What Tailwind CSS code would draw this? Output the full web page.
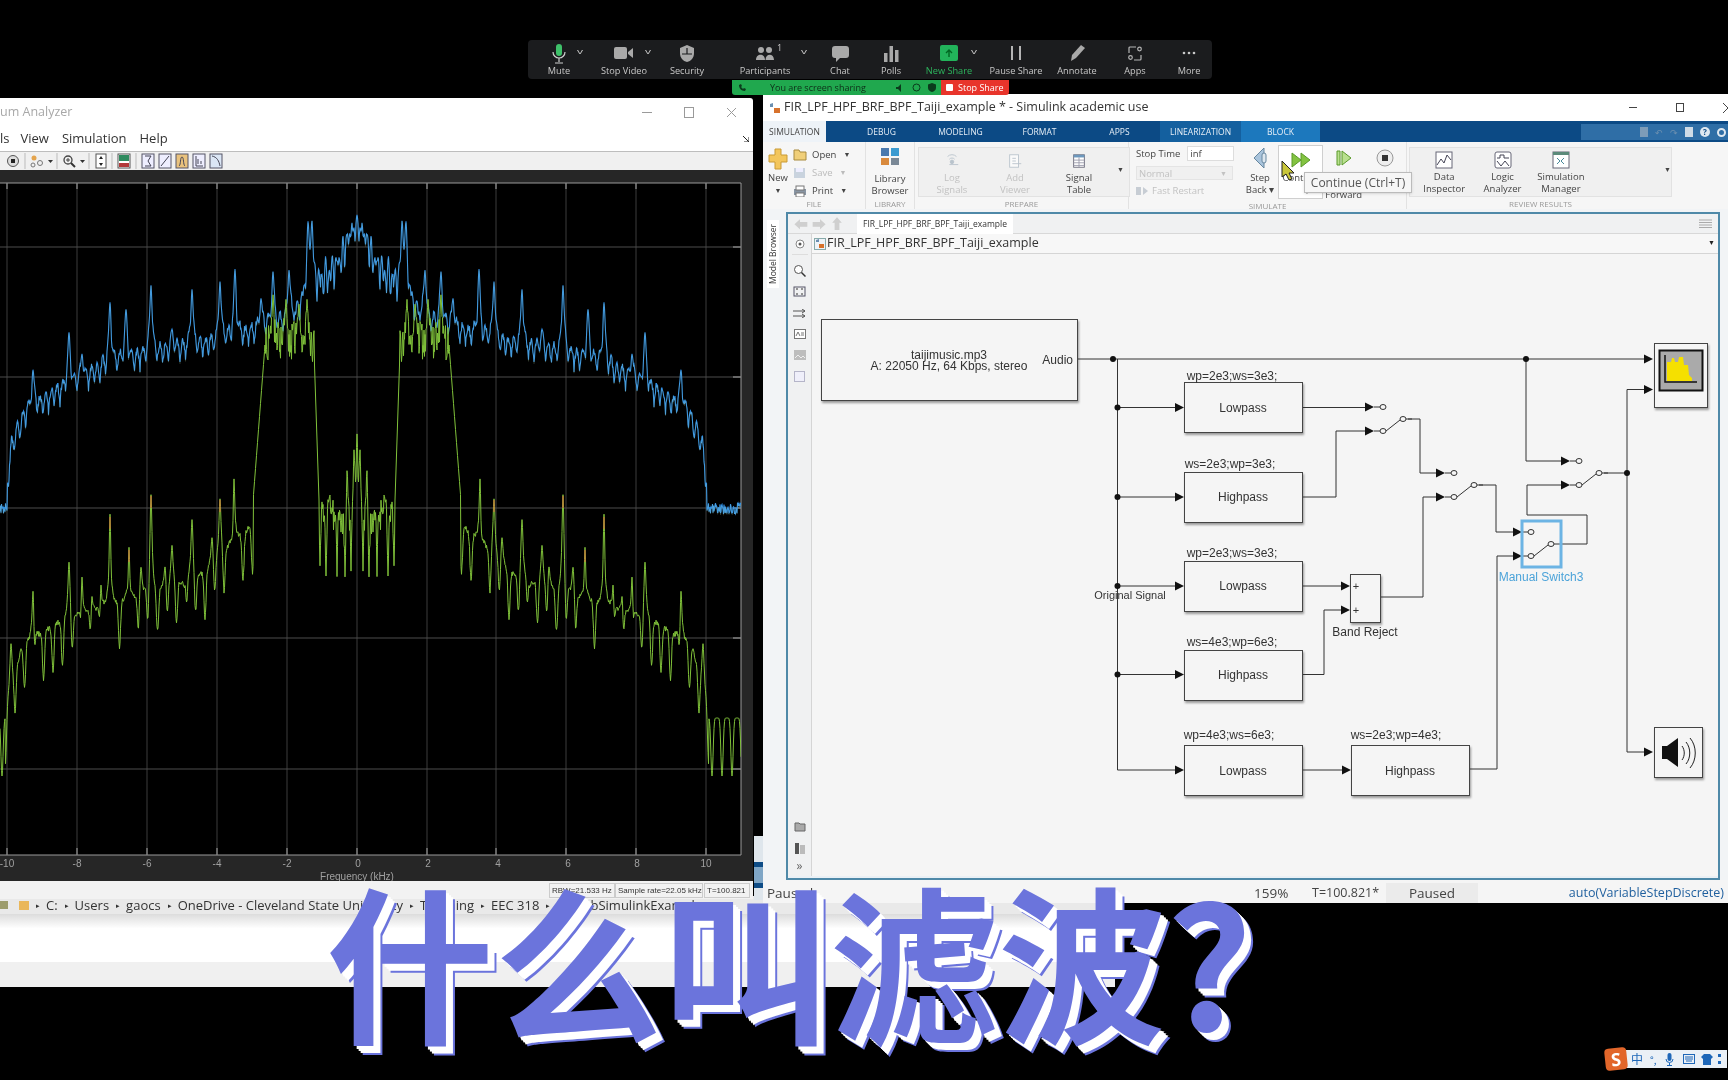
<!DOCTYPE html>
<html lang="zh-CN">
<head>
    <meta charset="UTF-8">
    <title>什么叫滤波?</title>
    <script src="https://cdn.jsdelivr.net/npm/@tailwindcss/browser@4"></script>
</head>
<body class="bg-black">
<div class="relative w-[1728px] h-[1080px] overflow-hidden bg-black font-['Open_Sans',sans-serif] blur-[0.5px]">

    <!-- Zoom toolbar -->
    <div class="absolute left-[528px] top-[40px] w-[684px] h-[39px] rounded-[4px] bg-[#1b1c1e] flex text-[9.200px] text-[#c8c8c8] text-center">
        <div class="relative w-[62px] flex flex-col items-center justify-between pt-[4px] pb-[1px]">
            <svg width="16" height="20" viewBox="0 0 16 20"><rect x="5" y="0" width="6" height="12" rx="3" fill="#3fc16a"/><path d="M2 8a6 6 0 0 0 12 0M8 14v4M4 19h8" fill="none" stroke="#cfcfcf" stroke-width="1.2"/></svg>
            <span>Mute</span>
            <span class="absolute left-[50px] top-[5px] text-[8px] scale-x-150">v</span>
        </div>
        <div class="relative w-[68px] flex flex-col items-center justify-between pt-[6px] pb-[1px]">
            <svg width="20" height="14" viewBox="0 0 20 14"><rect x="0" y="1" width="13" height="12" rx="2" fill="#a9a9a9"/><path d="M14 6l5-4v10l-5-4z" fill="#a9a9a9"/></svg>
            <span>Stop Video</span>
            <span class="absolute left-[56px] top-[5px] text-[8px] scale-x-150">v</span>
        </div>
        <div class="w-[58px] flex flex-col items-center justify-between pt-[4px] pb-[1px]">
            <svg width="16" height="19" viewBox="0 0 16 19"><path d="M8 1l7 3v5c0 5-3 8-7 9-4-1-7-4-7-9V4z" fill="#a9a9a9"/><path d="M8 4v6H3M8 10h5" stroke="#1b1c1e" stroke-width="1.2" fill="none"/></svg>
            <span>Security</span>
        </div>
        <div class="relative w-[98px] flex flex-col items-center justify-between pt-[6px] pb-[1px]">
            <svg width="20" height="15" viewBox="0 0 20 15"><circle cx="6" cy="4" r="3" fill="#a9a9a9"/><circle cx="14" cy="4" r="3" fill="#a9a9a9"/><path d="M1 14c0-7 9-7 9 0zM10.500 14c0-7 8.500-7 8.500 0z" fill="#a9a9a9"/></svg>
            <span>Participants</span>
            <span class="absolute left-[61px] top-[1px] text-[9px]">1</span>
            <span class="absolute left-[86px] top-[5px] text-[8px] scale-x-150">v</span>
        </div>
        <div class="w-[52px] flex flex-col items-center justify-between pt-[6px] pb-[1px]">
            <svg width="17" height="16" viewBox="0 0 17 16"><path d="M3 0h11a3 3 0 0 1 3 3v6a3 3 0 0 1-3 3H8l-4 4v-4H3a3 3 0 0 1-3-3V3a3 3 0 0 1 3-3z" fill="#a9a9a9"/></svg>
            <span>Chat</span>
        </div>
        <div class="w-[50px] flex flex-col items-center justify-between pt-[5px] pb-[1px]">
            <svg width="15" height="17" viewBox="0 0 15 17"><rect x="0" y="8" width="3.500" height="9" fill="#a9a9a9"/><rect x="5.500" y="1" width="3.500" height="16" fill="#a9a9a9"/><rect x="11" y="5" width="3.500" height="12" fill="#a9a9a9"/></svg>
            <span>Polls</span>
        </div>
        <div class="relative w-[66px] flex flex-col items-center justify-between pt-[5px] pb-[1px] text-[#2db55d]">
            <svg width="18" height="16" viewBox="0 0 18 16"><rect width="18" height="16" rx="2" fill="#22b35a"/><path d="M9 12V5M6 8l3-3 3 3" fill="none" stroke="#062" stroke-width="1.400"/></svg>
            <span>New Share</span>
            <span class="absolute left-[56px] top-[5px] text-[8px] text-[#c8c8c8] scale-x-150">v</span>
        </div>
        <div class="w-[68px] flex flex-col items-center justify-between pt-[6px] pb-[1px]">
            <svg width="12" height="14" viewBox="0 0 12 14"><rect x="1" width="2" height="14" fill="#b5b5b5"/><rect x="9" width="2" height="14" fill="#b5b5b5"/></svg>
            <span>Pause Share</span>
        </div>
        <div class="w-[54px] flex flex-col items-center justify-between pt-[5px] pb-[1px]">
            <svg width="15" height="16" viewBox="0 0 15 16"><path d="M11 0l4 3-9 10-5 3 1-6z" fill="#a9a9a9"/></svg>
            <span>Annotate</span>
        </div>
        <div class="w-[62px] flex flex-col items-center justify-between pt-[6px] pb-[1px]">
            <svg width="14" height="15" viewBox="0 0 14 15" fill="none" stroke="#b5b5b5" stroke-width="1.200"><path d="M8 1H2a1 1 0 0 0-1 1v5M13 9v4a1 1 0 0 1-1 1H6"/><circle cx="11.500" cy="3" r="1.800"/><circle cx="2.500" cy="11.500" r="1.800"/></svg>
            <span>Apps</span>
        </div>
        <div class="w-[46px] flex flex-col items-center justify-between pt-[11px] pb-[1px]">
            <svg width="14" height="4" viewBox="0 0 14 4"><circle cx="2" cy="2" r="1.300" fill="#c8c8c8"/><circle cx="7" cy="2" r="1.300" fill="#c8c8c8"/><circle cx="12" cy="2" r="1.300" fill="#c8c8c8"/></svg>
            <span>More</span>
        </div>
    </div>

    <!-- Screen sharing banner -->
    <div class="absolute left-[732px] top-[80px] flex h-[15px] text-[9px] leading-[15px] z-10">
        <div class="w-[209px] bg-[#20a84e] rounded-bl-[3px] text-[#0d2e18] flex items-center pl-[6px]">
            <svg width="8" height="8" viewBox="0 0 8 8"><path d="M1 1l2-1 1 2-1 1 2 2 1-1 2 1-1 2C3 7 1 4 1 1z" fill="#0b3b1c"/></svg>
            <span class="ml-[24px]">You are screen sharing</span>
            <svg class="ml-[30px]" width="9" height="8" viewBox="0 0 9 8"><path d="M0 3h2l3-3v8L2 5H0z" fill="#0b3b1c"/></svg>
            <svg class="ml-[7px]" width="9" height="9" viewBox="0 0 9 9"><circle cx="4.500" cy="4.500" r="3.500" fill="none" stroke="#0b3b1c"/></svg>
            <svg class="ml-[7px]" width="8" height="9" viewBox="0 0 8 9"><path d="M4 0l4 1.500V5c0 2-2 3.500-4 4-2-.5-4-2-4-4V1.500z" fill="#0b3b1c"/></svg>
        </div>
        <div class="w-[68px] bg-[#e8342b] rounded-br-[3px] text-white flex items-center pl-[5px]">
            <span class="w-[7px] h-[7px] bg-white rounded-[1px] mr-[5px]"></span>Stop Share
        </div>
    </div>

    <!-- File explorer behind the two windows -->
    <div class="absolute left-0 top-[896px] w-[1115px] h-[91px] bg-white">
        <div class="h-[18px] bg-[#e9e9e9] flex items-center text-[13px] leading-[15px] text-[#333] whitespace-nowrap pl-[3px]">
            <span class="w-[8px] h-[8px] bg-[#9c9c6c] -ml-[3px]"></span>
            <span class="w-[10px] h-[9px] bg-[#eab75a] ml-[11px]"></span>
            <span class="ml-[7px] text-[7px]">▸</span><span class="ml-[6px]">C:</span>
            <span class="ml-[7px] text-[7px]">▸</span><span class="ml-[6px]">Users</span>
            <span class="ml-[7px] text-[7px]">▸</span><span class="ml-[6px]">gaocs</span>
            <span class="ml-[7px] text-[7px]">▸</span><span class="ml-[6px]">OneDrive - Cleveland State University</span>
            <span class="ml-[7px] text-[7px]">▸</span><span class="ml-[6px]">Teaching</span>
            <span class="ml-[7px] text-[7px]">▸</span><span class="ml-[6px]">EEC 318</span>
            <span class="ml-[7px] text-[7px]">▸</span><span class="ml-[6px]">MatlabSimulinkExamples</span>
        </div>
        <div class="h-[48px] bg-gradient-to-b from-[#dcdcdc] via-white via-30% to-white"></div>
        <div class="h-[25px] bg-[#f0f0f0]"></div>
    </div>

    <!-- Spectrum Analyzer window -->
    <div class="absolute left-0 top-[98px] w-[753px] h-[801px] bg-white rounded-tr-[3px] flex flex-col">
        <div class="h-[28px] flex items-center justify-between text-[12.500px] text-[#a8a8a8]">
            <span>um Analyzer</span>
            <div class="flex items-center mr-[16px] gap-[32px]">
                <span class="w-[10px] h-px bg-[#9a9a9a]"></span>
                <span class="w-[10px] h-[11px] border border-[#9a9a9a]"></span>
                <svg width="11" height="11" viewBox="0 0 11 11"><path d="M1 1l9 9M10 1l-9 9" stroke="#9a9a9a"/></svg>
            </div>
        </div>
        <div class="relative h-[25px] flex items-center text-[13px] text-[#333]">
            <span>ls</span><span class="ml-[11px]">View</span><span class="ml-[13px]">Simulation</span><span class="ml-[13px]">Help</span>
            <svg class="absolute left-[743px] top-[10px]" width="6" height="6" viewBox="0 0 6 6"><path d="M0 0l6 6M6 1v5H1" stroke="#222" fill="none"/></svg>
        </div>
        <div class="h-[19px] bg-[#f0f0f0] border-t border-[#bdbdbd] flex items-center">
            <svg width="225" height="18" viewBox="0 0 225 18">
                <circle cx="13" cy="9" r="5.500" fill="#ddd" stroke="#555"/><rect x="11" y="7" width="4" height="4" fill="#222"/>
                <path d="M25 1v16M57 1v16M89 1v16M112 1v16M136 1v16" stroke="#bbb"/>
                <circle cx="34" cy="6" r="2.500" fill="#e4a44d"/><circle cx="40" cy="11" r="2.500" fill="none" stroke="#777"/><circle cx="33" cy="13" r="2" fill="none" stroke="#777"/>
                <path d="M48 8h5l-2.500 3z" fill="#333"/>
                <circle cx="68" cy="8" r="4" fill="none" stroke="#444" stroke-width="1.300"/><path d="M71 11l4 4" stroke="#333" stroke-width="2"/><path d="M66 8h4M68 6v4" stroke="#444"/>
                <path d="M80 8h5l-2.500 3z" fill="#333"/>
                <rect x="96" y="2" width="10" height="14" fill="#fff" stroke="#555"/><path d="M101 4l-2 3h4zM101 14l-2-3h4z" fill="#222"/>
                <rect x="118" y="2" width="12" height="14" fill="#fff" stroke="#555"/><rect x="119" y="3" width="10" height="6" fill="#2f8a5e"/><rect x="119" y="11" width="10" height="4" fill="#b23a3a"/>
                <g fill="#eef" stroke="#556">
                    <rect x="142" y="2" width="12" height="14"/><rect x="159" y="2" width="12" height="14"/><rect x="176" y="2" width="12" height="14" fill="#e9c27d"/><rect x="193" y="2" width="12" height="14"/><rect x="210" y="2" width="12" height="14" fill="#dbe6f5"/>
                </g>
                <path d="M145 4h6l-3 5 3 5h-6M161 14l8-10M179 14c2-1 1-9 3-9s1 8 3 9M196 4v10h7M198 12v-5M201 12V9M212 4c5 1 7 5 8 10" fill="none" stroke="#445"/>
            </svg>
        </div>
        <div class="flex-1 relative bg-[#262626]">
            <svg id="spectrum" class="absolute inset-0" width="753" height="711" viewBox="0 170 753 711" font-family="Liberation Sans" font-size="10" fill="#a0a0a0">
                <defs><clipPath id="plotClip"><rect x="0" y="183" width="741" height="672"/></clipPath></defs>
                <rect x="0" y="183" width="741" height="672" fill="#000"/>
                <path d="M0 183H741V855H0" fill="none" stroke="#9a9a9a"/>
                <path d="M7 183V855M77 183V855M147 183V855M217 183V855M287 183V855M357 183V855M427 183V855M496 183V855M566 183V855M636 183V855M706 183V855" stroke="#3c3c3c"/>
                <path d="M0 247H741M0 377H741M0 508H741M0 638H741M0 769H741" stroke="#4c4c4c"/>
                <path d="M7 183v6M77 183v6M147 183v6M217 183v6M287 183v6M357 183v6M427 183v6M496 183v6M566 183v6M636 183v6M706 183v6M7 855v-7M77 855v-7M147 855v-7M217 855v-7M287 855v-7M357 855v-7M427 855v-7M496 855v-7M566 855v-7M636 855v-7M706 855v-7M733 247h8M733 377h8M733 508h8M733 638h8M733 769h8" stroke="#aaa"/>
                <g clip-path="url(#plotClip)">
                    <path id="traceBlue" fill="none" stroke="#2f8fe6" stroke-width="1.100"/>
                    <path id="traceBlueTip" fill="none" stroke="#b9e0a8" stroke-width="0.300" opacity="0.500"/>
                    <path id="traceGreen" fill="none" stroke="#80c23a" stroke-width="1"/>
                    <path id="traceRed" fill="none" stroke="#e2653a" stroke-width="1"/>
                </g>
                <g text-anchor="middle">
                    <text x="7" y="867">-10</text><text x="77" y="867">-8</text><text x="147" y="867">-6</text><text x="217" y="867">-4</text><text x="287" y="867">-2</text><text x="358" y="867">0</text><text x="428" y="867">2</text><text x="498" y="867">4</text><text x="568" y="867">6</text><text x="637" y="867">8</text><text x="706" y="867">10</text>
                    <text x="357" y="880">Frequency (kHz)</text>
                </g>
            </svg>
        </div>
        <div class="h-[18px] bg-[#f2f2f2] flex justify-end items-center text-[8px] whitespace-nowrap font-['Liberation_Sans',sans-serif] text-[#333] pr-[3px]">
            <span class="w-[66px] h-[15px] border border-[#ccc] pl-[2px] leading-[14px]">RBW=21.533 Hz</span>
            <span class="w-[88px] h-[15px] border border-[#ccc] pl-[2px] leading-[14px]">Sample rate=22.05 kHz</span>
            <span class="w-[46px] h-[15px] border border-[#ccc] ml-[1px] pl-[2px] leading-[14px]">T=100.821</span>
        </div>
    </div>
    <div class="absolute left-[754px] top-[836px] w-[9px] h-[64px] bg-[#dfe6ec]">
        <div class="h-[26px] mt-[26px] border-y-[5px] border-[#0e4c86] bg-[#7fa6c6]"></div>
    </div>

    <!-- Simulink window -->
    <div class="absolute left-[763px] top-[94px] w-[965px] h-[809px] bg-[#f2f4f6] flex flex-col">
        <div class="h-[27px] bg-white flex items-center justify-between text-[12.500px] text-[#333]">
            <div class="flex items-center pl-[6px]">
                <svg width="12" height="12" viewBox="0 0 12 12"><path d="M1 2l3-1v4H1z" fill="#6a8fb0"/><rect x="5" y="6" width="6" height="5" fill="#d7722c"/></svg>
                <span class="ml-[3px]">FIR_LPF_HPF_BRF_BPF_Taiji_example * - Simulink academic use</span>
            </div>
            <div class="flex items-center gap-[39px] -mr-[5px]">
                <span class="w-[8px] h-px bg-[#444]"></span>
                <span class="w-[8px] h-[9px] border border-[#444]"></span>
                <svg width="10" height="10" viewBox="0 0 10 10"><path d="M0 0l10 10M10 0L0 10" stroke="#444"/></svg>
            </div>
        </div>
        <!-- tabs -->
        <div class="h-[21px] bg-[#0c4a85] flex items-stretch text-[8.500px] leading-[21px] text-[#e6eef6] text-center">
            <span class="w-[63px] bg-[#eef3f8] text-[#444]">SIMULATION</span>
            <span class="w-[79px] ml-[16px]">DEBUG</span>
            <span class="w-[79px]">MODELING</span>
            <span class="w-[79px]">FORMAT</span>
            <span class="w-[81px]">APPS</span>
            <span class="w-[81px] bg-[#14609f]">LINEARIZATION</span>
            <span class="w-[79px] bg-[#1c78bd]">BLOCK</span>
            <div class="ml-auto w-[147px] h-[16px] mt-[3px] bg-[#2f6ea6] flex items-center justify-end gap-[7px] pr-[2px]">
                <span class="w-[8px] h-[10px] bg-[#7d9cb8]"></span>
                <span class="text-[#6d90b0] text-[9px]">↶</span>
                <span class="text-[#6d90b0] text-[9px]">↷</span>
                <span class="w-[8px] h-[10px] bg-[#cfdbe6]"></span>
                <span class="w-[10px] h-[10px] rounded-full bg-[#dfe8f0] text-[#0c4a85] text-[8px] leading-[10px] font-bold">?</span>
                <span class="w-[9px] h-[9px] rounded-full border-2 border-[#dfe8f0]"></span>
            </div>
        </div>
        <!-- ribbon -->
        <div class="relative h-[67px] bg-[#f6f6f6] flex text-[9.500px] leading-[12px] text-[#444] text-center">
            <div class="w-[103px] flex flex-col border-r border-[#e2e2e2]">
                <div class="flex-1 flex pt-[6px]">
                    <div class="w-[30px] flex flex-col items-center">
                        <svg width="20" height="22" viewBox="0 0 20 22"><path d="M7 1h6v6h6v7h-6v7H7v-7H1V7h6z" fill="#f3c65c" stroke="#c99a35"/></svg>
                        <span class="mt-[2px]">New</span><span class="text-[7px] leading-[13px]">▼</span>
                    </div>
                    <div class="w-[60px] flex flex-col gap-[4px] text-left">
                        <div class="flex items-center h-[14px]"><svg width="14" height="12" viewBox="0 0 14 12"><path d="M1 1h5l1 2h6v8H1z" fill="#f0cf79" stroke="#a88a3e"/></svg><span class="ml-[5px]">Open</span><span class="ml-[7px] text-[7px]">▼</span></div>
                        <div class="flex items-center h-[14px] text-[#bbb]"><svg width="14" height="12" viewBox="0 0 14 12"><rect x="1" y="1" width="11" height="10" fill="#c9d3de"/><rect x="3" y="1" width="7" height="4" fill="#eef"/></svg><span class="ml-[5px]">Save</span><span class="ml-[7px] text-[7px]">▼</span></div>
                        <div class="flex items-center h-[14px]"><svg width="14" height="12" viewBox="0 0 14 12"><rect x="1" y="4" width="12" height="6" fill="#8895a3"/><rect x="3" y="1" width="8" height="4" fill="#fff" stroke="#777"/><rect x="3" y="8" width="8" height="4" fill="#fff" stroke="#777"/></svg><span class="ml-[5px]">Print</span><span class="ml-[7px] text-[7px]">▼</span></div>
                    </div>
                </div>
                <span class="text-[8px] leading-[10px] text-[#999]">FILE</span>
            </div>
            <div class="w-[49px] flex flex-col border-r border-[#e2e2e2]">
                <div class="flex-1 flex flex-col items-center pt-[5px]">
                    <svg width="20" height="19" viewBox="0 0 20 19"><rect x="1" y="1" width="8" height="8" fill="#4a79ad"/><rect x="11" y="1" width="8" height="8" fill="#3b9bd1"/><rect x="1" y="11" width="8" height="7" fill="#d98a3d"/><rect x="11" y="11" width="8" height="7" fill="#7a8896"/></svg>
                    <span class="mt-[7px]">Library</span><span>Browser</span>
                </div>
                <span class="text-[8px] leading-[10px] text-[#999]">LIBRARY</span>
            </div>
            <div class="w-[214px] flex flex-col border-r border-[#e2e2e2]">
                <div class="flex-1 pt-[5px] pl-[3px]">
                    <div class="h-[50px] w-[212px] bg-[#f0f0f0] border border-[#e2e2e2] flex">
                        <div class="w-[64px] pl-[2px] flex flex-col items-center text-[#c2c2c2]">
                            <svg class="mt-[5px]" width="18" height="18" viewBox="0 0 18 18" fill="none" stroke="#b9c3cc"><path d="M4 4a7 7 0 0 1 10 0M6 7a4 4 0 0 1 6 0"/><circle cx="9" cy="10" r="2" fill="#b9c3cc"/><path d="M6 13h10"/></svg>
                            <span class="mt-[3px]">Log</span><span>Signals</span>
                        </div>
                        <div class="w-[64px] flex flex-col items-center text-[#c2c2c2]">
                            <svg class="mt-[5px]" width="18" height="18" viewBox="0 0 18 18" fill="none" stroke="#b9c3cc"><rect x="3" y="2" width="10" height="14" fill="#fafafa"/><path d="M6 6h4M6 9h4M6 12h10"/></svg>
                            <span class="mt-[3px]">Add</span><span>Viewer</span>
                        </div>
                        <div class="w-[64px] flex flex-col items-center">
                            <svg class="mt-[5px]" width="18" height="18" viewBox="0 0 18 18"><rect x="3" y="2" width="12" height="14" fill="#fff" stroke="#667"/><rect x="3" y="2" width="12" height="3" fill="#6d98bd"/><path d="M3 8h12M3 11h12M3 14h12M9 5v11" stroke="#99a"/></svg>
                            <span class="mt-[3px]">Signal</span><span>Table</span>
                        </div>
                        <span class="ml-[6px] mt-[16px] text-[7px]">▼</span>
                    </div>
                </div>
                <span class="text-[8px] leading-[10px] text-[#999]">PREPARE</span>
            </div>
            <div class="w-[278px] flex flex-col border-r border-[#e2e2e2]">
                <div class="flex-1 flex pt-[4px]">
                    <div class="w-[113px] pl-[7px] flex flex-col text-left">
                        <div class="flex items-center h-[15px]"><span>Stop Time</span><span class="ml-[7px] w-[47px] h-[15px] bg-white border border-[#ddd] pl-[2px] leading-[14px]">inf</span></div>
                        <div class="mt-[5px] w-[97px] h-[14px] bg-[#f0f0f0] border border-[#e4e4e4] text-[#c2c2c2] flex justify-between pl-[2px] pr-[5px] leading-[13px]"><span>Normal</span><span class="text-[7px]">▼</span></div>
                        <div class="mt-[5px] flex items-center text-[#c2c2c2]"><svg width="12" height="10" viewBox="0 0 12 10"><path d="M0 1h5v8H0zM7 1l5 4-5 4z" fill="#c7cdd4"/></svg><span class="ml-[4px]">Fast Restart</span></div>
                    </div>
                    <div class="w-[37px] flex flex-col items-center">
                        <svg class="mt-[1px]" width="18" height="22" viewBox="0 0 18 22"><path d="M13 1v20L3 11z" fill="#a9c4dc" stroke="#67879f"/><rect x="11" y="6" width="4" height="10" rx="2" fill="#dde7ef" stroke="#67879f"/></svg>
                        <span class="mt-[3px]">Step</span><span>Back ▾</span>
                    </div>
                    <div class="w-[45px] -mt-[1px] h-[54px] bg-white border border-[#cfcfcf] flex flex-col items-start">
                        <svg class="ml-[12px] mt-[6px]" width="20" height="16" viewBox="0 0 20 16"><path d="M1 1l9 7-9 7zM10 1l9 7-9 7z" fill="#83c341" stroke="#5a9a2b"/></svg>
                        <span class="ml-[3px] mt-[4px]">Cont</span>
                        <span class="ml-[24px] mt-[2px] text-[7px]">▼</span>
                    </div>
                    <div class="w-[41px] flex flex-col items-center">
                        <svg class="mt-[4px]" width="16" height="16" viewBox="0 0 16 16"><path d="M1 1h3v14H1zM6 1l9 7-9 7z" fill="#b9e08f" stroke="#5a9a2b"/></svg>
                        <span class="mt-[23px]">Forward</span>
                    </div>
                    <div class="w-[42px] flex justify-center">
                        <svg class="mt-[3px]" width="18" height="18" viewBox="0 0 18 18"><circle cx="9" cy="9" r="8" fill="#eee" stroke="#999"/><rect x="6" y="6" width="6" height="6" fill="#333"/></svg>
                    </div>
                </div>
                <span class="text-[8px] leading-[10px] text-[#999]">SIMULATE</span>
            </div>
            <div class="w-[267px] flex flex-col">
                <div class="flex-1 pt-[5px] pl-[2px]">
                    <div class="h-[50px] w-[263px] bg-[#f0f0f0] border border-[#e2e2e2] flex pl-[5px]">
                        <div class="w-[60px] flex flex-col items-center">
                            <svg class="mt-[3px]" width="18" height="18" viewBox="0 0 18 18"><rect x="1" y="1" width="16" height="16" fill="#fff" stroke="#667"/><path d="M2 14l4-6 3 4 3-8 4 5" fill="none" stroke="#445"/></svg>
                            <span class="mt-[2px]">Data</span><span>Inspector</span>
                        </div>
                        <div class="w-[60px] flex flex-col items-center">
                            <svg class="mt-[3px]" width="18" height="18" viewBox="0 0 18 18"><rect x="1" y="1" width="16" height="16" rx="2" fill="#fff" stroke="#667"/><path d="M3 7h3V4h4v3h5M3 10l4 5 4-5 4 5" fill="none" stroke="#445"/></svg>
                            <span class="mt-[2px]">Logic</span><span>Analyzer</span>
                        </div>
                        <div class="w-[60px] flex flex-col items-center">
                            <svg class="mt-[3px]" width="18" height="18" viewBox="0 0 18 18"><rect x="1" y="1" width="16" height="16" fill="#fff" stroke="#667"/><rect x="1" y="1" width="16" height="3" fill="#5b8a7a"/><path d="M5 7l3 3-3 3M12 7l-3 3 3 3" fill="none" stroke="#4a8a9a"/></svg>
                            <span class="mt-[2px]">Simulation</span><span>Manager</span>
                        </div>
                        <span class="ml-[74px] mt-[16px] text-[7px]">▼</span>
                    </div>
                </div>
                <span class="text-[8px] leading-[10px] text-[#999]">REVIEW RESULTS</span>
            </div>
            <!-- tooltip and pointer over the ribbon -->
            <div class="absolute left-[541px] top-[30px] w-[108px] h-[21px] bg-[#f6f6f6] border border-[#bbb] text-[12px] leading-[19px] text-[#555] shadow-sm">Continue (Ctrl+T)</div>
            <svg class="absolute left-[518px] top-[18px]" width="14" height="22" viewBox="0 0 14 22"><path d="M1 1v16l4-3 3 6 3-1-3-6h5z" fill="#c9c63a" stroke="#222"/></svg>
        </div>
        <!-- model editor -->
        <div class="flex-1 flex pt-[3px]">
            <div class="w-[23px] relative">
                <span class="absolute left-[4px] top-[8px] h-[68px] text-[8.500px] leading-[12px] whitespace-nowrap text-[#333] text-center bg-white [writing-mode:vertical-rl] rotate-180">Model Browser</span>
            </div>
            <div class="w-[934px] h-[668px] border-2 border-[#4f89a8] flex flex-col bg-[#f5f5f5]">
                <div class="h-[20px] bg-[#f0f1f2] border-b border-[#d8d8d8] flex items-center">
                    <span class="w-[69px] pl-[6px] text-[#cfcfcf] text-[14px] leading-[18px] tracking-[4px]">⬅➡⬆</span>
                    <span class="w-[156px] h-[20px] bg-white text-[8.500px] leading-[20px] text-center text-[#333]">FIR_LPF_HPF_BRF_BPF_Taiji_example</span>
                    <svg class="ml-auto mr-[6px]" width="13" height="10" viewBox="0 0 13 10"><path d="M0 1h13M0 3.500h13M0 6h13M0 8.500h13" stroke="#aaa"/></svg>
                </div>
                <div class="flex-1 flex">
                    <!-- palette column -->
                    <div class="w-[24px] bg-[#f0f1f2] border-r border-[#d5d5d5] flex flex-col items-center">
                        <svg class="mt-[5px]" width="10" height="10" viewBox="0 0 10 10"><circle cx="5" cy="5" r="4" fill="#fff" stroke="#888"/><circle cx="5" cy="5" r="1.500" fill="#555"/></svg>
                        <div class="w-[16px] h-px bg-[#ddd] my-[5px]"></div>
                        <svg class="mt-[4px]" width="13" height="13" viewBox="0 0 13 13"><circle cx="5.500" cy="5.500" r="4" fill="#fff" stroke="#555"/><path d="M8.500 8.500l4 4" stroke="#333" stroke-width="1.500"/></svg>
                        <svg class="mt-[8px]" width="13" height="13" viewBox="0 0 13 13"><rect x="1" y="2" width="11" height="9" fill="none" stroke="#556"/><path d="M3 4h2M8 4h2M3 9h2M8 9h2" stroke="#333"/></svg>
                        <svg class="mt-[11px]" width="13" height="9" viewBox="0 0 13 9"><path d="M0 2h12M0 7h12M9 0l3 2-3 2M9 5l3 2-3 2" fill="none" stroke="#555"/></svg>
                        <svg class="mt-[11px]" width="12" height="10" viewBox="0 0 12 10"><rect x=".5" y=".5" width="11" height="9" fill="#fff" stroke="#777"/><path d="M2 7l2-4 2 4M7 4h3M7 6h3" fill="none" stroke="#777"/></svg>
                        <svg class="mt-[11px]" width="12" height="10" viewBox="0 0 12 10"><rect width="12" height="10" fill="#bdbdbd"/><path d="M1 8l3-3 3 3 2-2 2 2" fill="none" stroke="#eee"/></svg>
                        <svg class="mt-[11px]" width="11" height="11" viewBox="0 0 11 11"><rect x=".5" y=".5" width="10" height="10" fill="#efeffa" stroke="#b5b5c9"/></svg>
                        <svg class="mt-auto" width="12" height="11" viewBox="0 0 12 11"><path d="M1 2h4l1 1h5v7H1z" fill="#aaa" stroke="#666"/></svg>
                        <svg class="mt-[10px]" width="12" height="13" viewBox="0 0 12 13"><rect x="1" y="1" width="4" height="11" fill="#555"/><rect x="6" y="3" width="5" height="9" fill="#bbb"/></svg>
                        <span class="mt-[4px] mb-[3px] text-[12px] leading-[14px] text-[#666]">»</span>
                    </div>
                    <div class="flex-1 flex flex-col">
                        <!-- address bar -->
                        <div class="h-[20px] bg-[#f7f7f7] border-b border-[#d5d5d5] flex items-center">
                            <svg class="ml-[2px]" width="12" height="12" viewBox="0 0 12 12"><rect x=".5" y=".5" width="11" height="11" fill="#eef3f8" stroke="#8aa"/><path d="M2 2l3-1v3H2z" fill="#6a8fb0"/><rect x="5" y="6" width="5" height="4" fill="#d7722c"/></svg>
                            <span class="ml-[1px] text-[12.500px] text-[#333]">FIR_LPF_HPF_BRF_BPF_Taiji_example</span>
                            <span class="ml-auto mr-[3px] text-[7px] text-[#222]">▼</span>
                        </div>
                        <div class="flex-1 relative">
                            <svg class="absolute inset-0" width="906" height="624" viewBox="812 254 906 624" font-family="Liberation Sans" font-size="12" fill="#333">
                                <defs>
                                    <polygon id="arr" points="-9,-4.500 0,0 -9,4.500" fill="#111"/>
                                    <g id="sw">
                                        <use href="#arr"/><use href="#arr" y="24"/>
                                        <path d="M0 0h6M0 24h6M12 24l14-11M32 12h6" fill="none" stroke="#333"/>
                                        <g fill="#f5f5f5" stroke="#333"><ellipse cx="9" cy="0" rx="3" ry="2.500"/><ellipse cx="9" cy="24" rx="3" ry="2.500"/><ellipse cx="29" cy="12" rx="3" ry="2.500"/></g>
                                    </g>
                                </defs>
                                <!-- blocks -->
                                <g fill="#f5f5f5" stroke="#444" style="filter:drop-shadow(1px 2px 1px #999)">
                                    <rect x="821.500" y="319.500" width="256" height="81"/>
                                    <rect x="1184.500" y="382.500" width="118" height="50"/>
                                    <rect x="1184.500" y="472.500" width="118" height="50"/>
                                    <rect x="1184.500" y="561.500" width="118" height="50"/>
                                    <rect x="1184.500" y="650.500" width="118" height="50"/>
                                    <rect x="1184.500" y="745.500" width="118" height="50"/>
                                    <rect x="1351.500" y="745.500" width="118" height="50"/>
                                    <rect x="1350.500" y="574.500" width="30" height="48"/>
                                    <rect x="1654.500" y="343.500" width="53" height="64"/>
                                    <rect x="1654.500" y="727.500" width="48" height="50"/>
                                </g>
                                <!-- signal lines -->
                                <path fill="none" stroke="#333" d="M1078 359H1650M1117.500 359V770H1176M1117.500 407.500H1176M1117.500 497H1176M1117.500 586H1176M1117.500 674.500H1176M1303 770H1343M1470 769H1497V556H1514M1303 407.500H1366M1303 497H1336V431H1366M1303 586H1342M1303 674.500H1324V610H1342M1381 597H1423V497H1437M1408 419H1420V473H1437M1479 485H1496V532H1514M1526 359V461H1562M1562 544H1587V515H1527V485H1562M1604 473H1627M1627 389.500H1645M1627 389.500V752H1645"/>
                                <g fill="#111">
                                    <circle cx="1113" cy="359" r="3"/><circle cx="1117.500" cy="407.500" r="3"/><circle cx="1117.500" cy="497" r="3"/><circle cx="1117.500" cy="586" r="3"/><circle cx="1117.500" cy="674.500" r="3"/><circle cx="1526" cy="359" r="3"/><circle cx="1627" cy="473" r="3"/>
                                </g>
                                <use href="#arr" x="1184" y="407.500"/><use href="#arr" x="1184" y="497"/><use href="#arr" x="1184" y="586"/><use href="#arr" x="1184" y="674.500"/><use href="#arr" x="1184" y="770"/><use href="#arr" x="1351" y="770"/><use href="#arr" x="1350" y="586"/><use href="#arr" x="1350" y="610"/><use href="#arr" x="1653" y="359"/><use href="#arr" x="1653" y="389.500"/><use href="#arr" x="1653" y="752"/>
                                <use href="#sw" x="1374" y="407"/><use href="#sw" x="1445" y="473"/><use href="#sw" x="1570" y="461"/><use href="#sw" x="1522" y="532"/>
                                <rect x="1522" y="521" width="39" height="46" fill="none" stroke="#6cb4e4" stroke-width="3"/>
                                <!-- block labels -->
                                <g text-anchor="middle">
                                    <text x="949" y="359">taijimusic.mp3</text>
                                    <text x="949" y="370">A: 22050 Hz, 64 Kbps, stereo</text>
                                    <text x="1243" y="412">Lowpass</text><text x="1243" y="501">Highpass</text><text x="1243" y="590">Lowpass</text><text x="1243" y="679">Highpass</text><text x="1243" y="775">Lowpass</text><text x="1410" y="775">Highpass</text>
                                    <text x="1232" y="380">wp=2e3;ws=3e3;</text><text x="1230" y="468">ws=2e3;wp=3e3;</text><text x="1232" y="557">wp=2e3;ws=3e3;</text><text x="1232" y="646">ws=4e3;wp=6e3;</text><text x="1229" y="739">wp=4e3;ws=6e3;</text><text x="1396" y="739">ws=2e3;wp=4e3;</text>
                                    <text x="1130" y="599" font-size="11">Original Signal</text>
                                    <text x="1365" y="636">Band Reject</text>
                                    <text x="1541" y="581" fill="#4ba3d9">Manual Switch3</text>
                                    <text x="1356" y="590" font-size="11">+</text><text x="1356" y="614" font-size="11">+</text>
                                </g>
                                <text x="1073" y="364" text-anchor="end">Audio</text>
                                <!-- scope -->
                                <rect x="1659.500" y="350.500" width="43" height="40" fill="#aaa" stroke="#111" stroke-width="2"/>
                                <polygon points="1667,381 1667,362 1671,362 1672,358 1674,358 1675,362 1678,362 1679,357 1683,357 1684,365 1688,365 1689,375 1692,378 1692,381" fill="#f5e000"/>
                                <path d="M1665 355V382H1697" fill="none" stroke="#111" stroke-width="1.500"/>
                                <!-- speaker -->
                                <path d="M1662 746h5l11-8v29l-11-8h-5z" fill="#111"/>
                                <path d="M1682 746c3 4 3 10 0 14M1686 742c5 6 5 16 0 22M1690 738c7 8 7 22 0 30" fill="none" stroke="#222"/>
                            </svg>
                        </div>
                    </div>
                </div>
                <div class="h-[2px] bg-[#eaf0f5]"></div>
            </div>
        </div>
        <!-- status bar -->
        <div class="h-[23px] bg-[#f5f5f5] flex items-center pt-[3px] text-[13.500px] text-[#444] whitespace-nowrap">
            <span class="w-[491px] pl-[4px]">Paused</span>
            <span class="w-[58px]">159%</span>
            <span class="w-[74px] text-[12.500px]">T=100.821*</span>
            <span class="w-[92px] h-[20px] bg-[#ebebeb] text-center leading-[20px]">Paused</span>
            <span class="ml-auto pr-[4px] text-[12.500px] text-[#1f5f9e]">auto(VariableStepDiscrete)</span>
        </div>
    </div>

    <!-- Sogou IME bar -->
    <div class="absolute left-[1605px] top-[1048px] flex items-center">
        <div class="w-[22px] h-[22px] rounded-[4px] bg-[#e2662a] text-white text-center text-[18px] leading-[22px] font-bold -rotate-6 z-10">S</div>
        <div class="w-[101px] h-[18px] -ml-[1px] bg-[#eaf0f6] flex items-center text-[#1e67b8] text-[12px] pl-[5px] font-['Noto_Sans_CJK_SC',sans-serif]">
            <span>中</span>
            <span class="ml-[7px] text-[10px]">°,</span>
            <svg class="ml-[8px]" width="9" height="13" viewBox="0 0 9 13"><rect x="2.500" y="0" width="4" height="8" rx="2" fill="#1e67b8"/><path d="M1 6a3.500 3.500 0 0 0 7 0M4.500 10v2M2 12.500h5" fill="none" stroke="#1e67b8"/></svg>
            <svg class="ml-[9px]" width="12" height="10" viewBox="0 0 12 10"><rect x=".5" y=".5" width="11" height="9" fill="none" stroke="#1e67b8"/><path d="M2 3h8M2 5h8M3 7h6" stroke="#1e67b8"/></svg>
            <svg class="ml-[6px]" width="12" height="11" viewBox="0 0 12 11"><path d="M3 0h6l3 3-2 2V11H2V5L0 3z" fill="#1e67b8"/></svg>
            <span class="ml-[5px] w-[3px] h-[10px] border-y-[3px] border-[#1e67b8]"></span>
        </div>
    </div>

    <!-- Caption -->
    <div class="absolute left-[326px] top-[858px] h-[200px] text-[168px] leading-[200px] font-bold text-[#6b74dc] whitespace-nowrap font-['Noto_Sans_CJK_SC',sans-serif] [text-shadow:3px_3px_0_#fff,5px_5px_0_#fff,7px_7px_0_#fff,9px_9px_0_#6b74dc] z-20">什么叫滤波?</div>
</div>

<script>
    // spectrum traces: same curve mirrored around 0 Hz
    const center = 357;

    function noise(i) {
        const s = Math.sin(i * 12.9898) * 43758.5453;
        return s - Math.floor(s);
    }

    function lerp(table, d) {
        for (let i = 1; i < table.length; i++) {
            if (d <= table[i][0]) {
                const [x0, y0] = table[i - 1], [x1, y1] = table[i];
                return y0 + (y1 - y0) * (d - x0) / (x1 - x0);
            }
        }
        return table[table.length - 1][1];
    }

    function spikes(list, d, y, w) {
        let out = y;
        list.forEach(([pd, py]) => {
            const u = (d - pd) / w;
            out -= (y - py) / (1 + u * u);
        });
        return out;
    }

    const blueBase = [[0, 300], [40, 322], [60, 338], [100, 350], [150, 365], [200, 372], [250, 385], [300, 412], [330, 432], [345, 462], [350, 505], [385, 508]];
    const bluePeaks = [[0, 216], [5, 232], [10, 235], [20, 262], [45, 229], [49, 229], [68, 272], [84, 273], [96, 300], [122, 270], [137, 283], [165, 290], [185, 330], [206, 286], [231, 310], [247, 303], [288, 333], [275, 355], [324, 370]];

    function blueY(d) {
        const base = lerp(blueBase, d);
        if (d >= 350) return 503 + noise(d) * 11;
        const comb = d < 70 ? Math.abs(Math.cos(d * Math.PI / 3.5)) * 55 * (1 - d / 75) : 0;
        const ripple = Math.abs(Math.sin(d * 0.55)) * 22 + noise(d) * 8;
        return spikes(bluePeaks, d, base - ripple - comb, 1.5);
    }

    const greenBase = [[104, 575], [150, 625], [200, 645], [250, 660], [300, 675], [330, 695], [345, 735], [352, 775], [385, 775]];
    const greenPeaks = [[123, 480], [137, 500], [145, 540], [165, 520], [172, 590], [185, 547], [192, 570], [206, 496], [216, 570], [228, 550], [247, 517], [256, 590], [265, 600], [275, 580], [288, 563], [324, 592], [336, 650], [346, 645]];
    const clusterUp = [[0, 435], [3, 450], [10, 456], [20, 475], [29, 490], [35, 492]];
    const clusterDown = [[6, 570], [12, 575], [20, 575], [31, 575], [37, 565]];

    function greenY(d) {
        if (d < 38) {
            const mid = 515 + (noise(d) - 0.5) * 46;
            const up = spikes(clusterUp, d, mid, 0.9);
            return spikes(clusterDown, d, up, 0.7);
        }
        if (d < 43) return 500 - (d - 38) * 30;
        if (d < 92) return spikes([[50, 300], [58, 305], [71, 300], [84, 295]], d, 322 + noise(d) * 44, 1);
        if (d < 104) return 345 + (d - 92) * 13;
        if (d >= 352) return 718 + Math.pow(Math.abs(Math.sin(d * Math.PI / 10)), 8) * 58;
        const base = lerp(greenBase, d);
        const arch = (1 - Math.pow(Math.abs(Math.cos(d * Math.PI / 9.5)), 8)) * 48 + noise(d) * 6;
        return spikes(greenPeaks, d, base - arch, 1.3);
    }

    function tracePath(fn, jitter) {
        let out = '';
        for (let x = 0; x <= 741; x += 0.5) {
            const d = Math.abs(x - center);
            out += (x === 0 ? 'M' : 'L') + x + ' ' + (fn(d) + jitter * noise(d + 3)).toFixed(1);
        }
        return out;
    }

    document.getElementById('traceBlue').setAttribute('d', tracePath(blueY, 0));
    document.getElementById('traceBlueTip').setAttribute('d', tracePath(blueY, 2));
    document.getElementById('traceGreen').setAttribute('d', tracePath(greenY, 0));

    // orange tips on the tallest green spikes
    let tips = '';
    [[206, 496], [247, 517], [228, 550], [137, 500]].forEach(([d, y]) => {
        tips += `M${center + d} ${y}v12M${center - d} ${y}v12`;
    });
    document.getElementById('traceRed').setAttribute('d', tips);
</script>
</body>
</html>
